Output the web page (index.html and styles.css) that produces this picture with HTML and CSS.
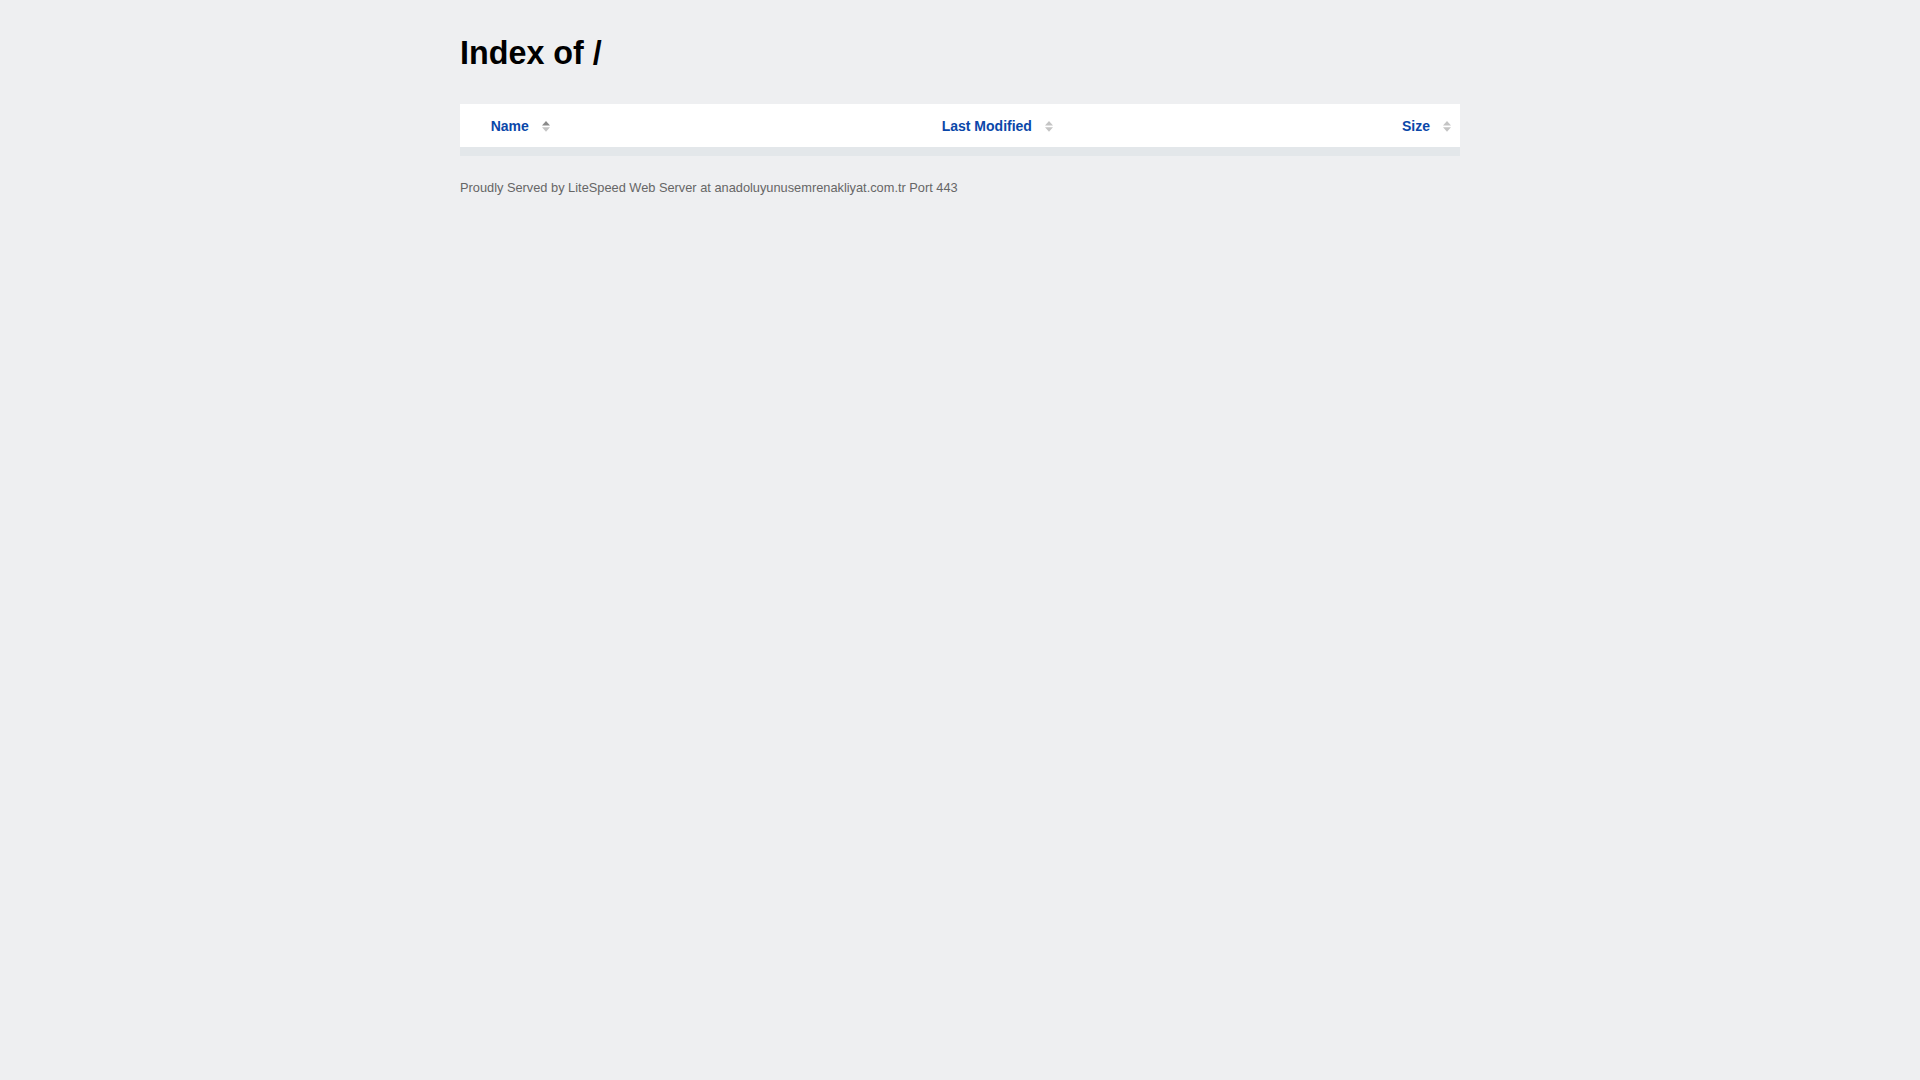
FILE: index.html
```html
<!DOCTYPE html>
<html lang="en">
<head>
<meta charset="utf-8">
<title>Index of /</title>
<link rel="stylesheet" href="styles.css">
</head>
<body>
<div class="wrap">
  <h1 class="title">Index of /</h1>
  <div class="listing">
    <div class="head">
      <div class="col col-name"><a class="sort" href="#">Name</a><svg class="icon" width="8" height="11" viewBox="0 0 8 11"><polygon points="4,0 8,4.6 0,4.6" fill="#8a8a8a"/><polygon points="0,6.2 8,6.2 4,10.8" fill="#c4c4c4"/></svg></div>
      <div class="col col-mod"><a class="sort" href="#">Last Modified</a><svg class="icon" width="8" height="11" viewBox="0 0 8 11"><polygon points="4,0 8,4.6 0,4.6" fill="#c4c4c4"/><polygon points="0,6.2 8,6.2 4,10.8" fill="#c4c4c4"/></svg></div>
      <div class="col col-size"><a class="sort" href="#">Size</a><svg class="icon" width="8" height="11" viewBox="0 0 8 11"><polygon points="4,0 8,4.6 0,4.6" fill="#c4c4c4"/><polygon points="0,6.2 8,6.2 4,10.8" fill="#c4c4c4"/></svg></div>
    </div>
    <div class="band"></div>
  </div>
  <p class="footer">Proudly Served by LiteSpeed Web Server at anadoluyunusemrenakliyat.com.tr Port 443</p>
</div>
</body>
</html>
```
FILE: styles.css
```css
html, body {
  margin: 0;
  padding: 0;
  background: #eeeff1;
  font-family: "Liberation Sans", Arial, sans-serif;
}
.wrap {
  width: 1000px;
  margin: 0 auto;
  padding-top: 34.5px;
}
.title {
  margin: 0;
  font-size: 32.3px;
  font-weight: bold;
  color: #000;
  line-height: 37px;
}
.listing {
  margin-top: 32.5px;
  background: #fff;
}
.head {
  display: flex;
  align-items: center;
  height: 43.4px;
}
.col {
  display: flex;
  align-items: center;
  font-size: 14px;
  font-weight: bold;
}
.col-name {
  width: 451px;
  padding-left: 30.7px;
}
.col-mod {
  padding-left: 0;
}
.col-size {
  margin-left: auto;
  padding-right: 9px;
}
.sort {
  color: #0a47a9;
  text-decoration: none;
}
.icon {
  display: block;
  margin-left: 13px;
  margin-top: 1px;
}
.band {
  height: 9px;
  background: #e3e7ea;
}
.footer {
  margin: 23.8px 0 0;
  font-size: 12.8px;
  color: #666;
}
```
